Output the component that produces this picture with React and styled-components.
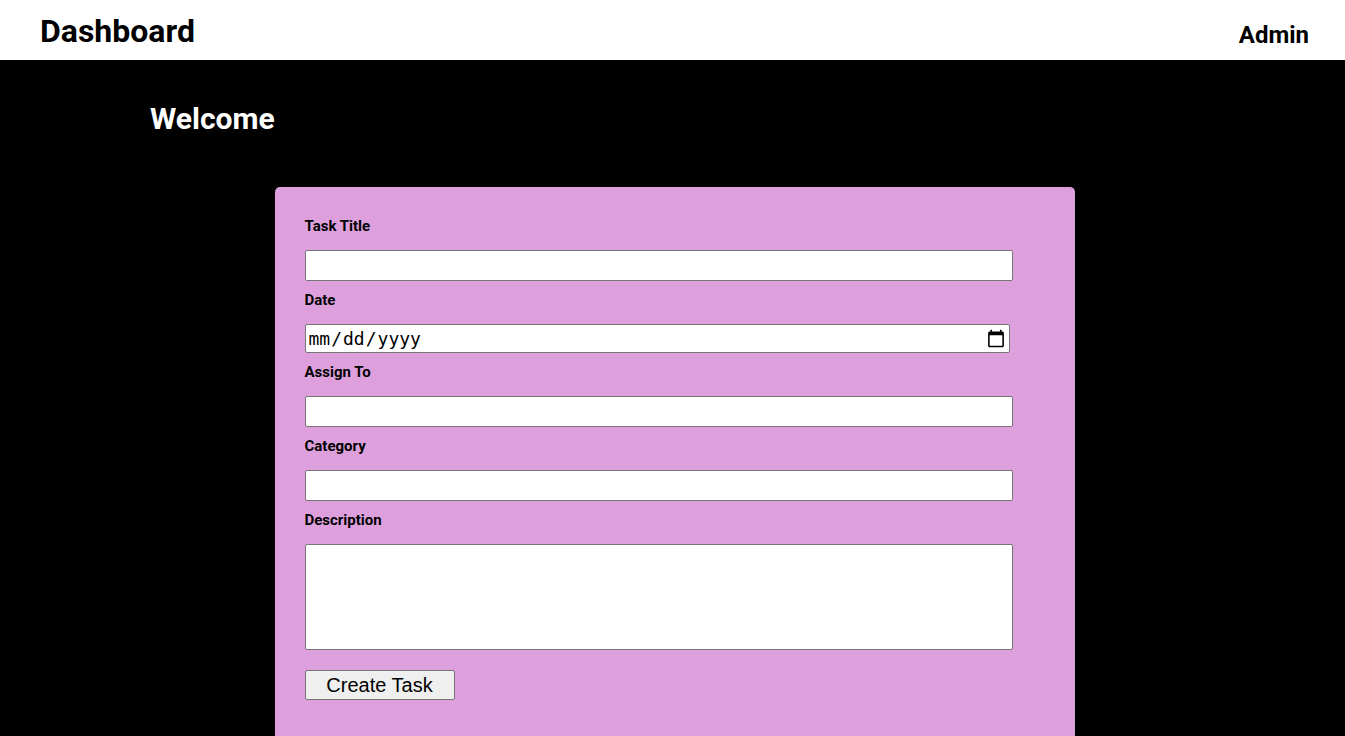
import React from "react";
import styled, { createGlobalStyle, css } from "styled-components";

const GlobalStyle = createGlobalStyle`
  html {
    scrollbar-width: none;
  }

  body {
    margin: 0;
    background: #000;
    font-family: Roboto, "Liberation Sans", sans-serif;
  }
`;

const Header = styled.header`
  display: flex;
  align-items: center;
  justify-content: space-between;
  box-sizing: border-box;
  height: 60px;
  padding: 2px 36px 0 40px;
  background: #fff;
  color: #000;
`;

const Brand = styled.h1`
  margin: 0;
  font-size: 32px;
  line-height: 38px;
`;

const Role = styled.h2`
  margin: 0;
  padding-top: 8px;
  font-size: 24px;
  line-height: 28px;
`;

const Welcome = styled.h2`
  margin: 0;
  padding: 40px 150px 50px;
  font-size: 30px;
  line-height: 37px;
  color: #fff;
`;

const FormArea = styled.section`
  padding-left: 4px;
`;

const TaskForm = styled.form`
  box-sizing: border-box;
  max-width: 800px;
  margin: 0 auto;
  padding: 30px 30px 60px;
  border-radius: 5px;
  background: plum;
`;

const Field = styled.div`
  display: flex;
  flex-direction: column;
  align-items: flex-start;
  gap: 15px;
  margin-bottom: 10px;
`;

const Label = styled.label`
  font-size: 15px;
  font-weight: 700;
  line-height: 18px;
`;

const control = css`
  box-sizing: border-box;
  width: 708px;
  max-width: 100%;
  margin: 0;
  border: 1px solid #767676;
  border-radius: 2px;
  background: #fff;
  font-size: 20px;
`;

const TextInput = styled.input`
  ${control}
  height: 31px;
`;

const DateInput = styled.input`
  ${control}
  width: 705px;
  height: 29px;
  padding: 0 1px 0 2px;
  font-family: "DejaVu Sans Mono", monospace;

  &::-webkit-datetime-edit {
    font-size: 18px;
  }
`;

const TextArea = styled.textarea`
  ${control}
  display: block;
  height: 106px;
  resize: none;
`;

const SubmitButton = styled.button`
  width: 150px;
  height: 30px;
  margin-top: 10px;
  padding: 0;
  border: 1px solid #767676;
  border-radius: 2px;
  background: #efefef;
  color: #000;
  font-family: "Liberation Sans", Arial, sans-serif;
  font-size: 20px;
`;

export default function App() {
  return (
    <>
      <GlobalStyle />
      <Header>
        <Brand>Dashboard</Brand>
        <Role>Admin</Role>
      </Header>
      <main>
        <Welcome>Welcome</Welcome>
        <FormArea>
          <TaskForm onSubmit={(event) => event.preventDefault()}>
            <Field>
              <Label htmlFor="title">Task Title</Label>
              <TextInput id="title" type="text" />
            </Field>
            <Field>
              <Label htmlFor="date">Date</Label>
              <DateInput id="date" type="date" />
            </Field>
            <Field>
              <Label htmlFor="assignee">Assign To</Label>
              <TextInput id="assignee" type="text" />
            </Field>
            <Field>
              <Label htmlFor="category">Category</Label>
              <TextInput id="category" type="text" />
            </Field>
            <Field>
              <Label htmlFor="description">Description</Label>
              <TextArea id="description" />
            </Field>
            <SubmitButton type="submit">Create Task</SubmitButton>
          </TaskForm>
        </FormArea>
      </main>
    </>
  );
}
